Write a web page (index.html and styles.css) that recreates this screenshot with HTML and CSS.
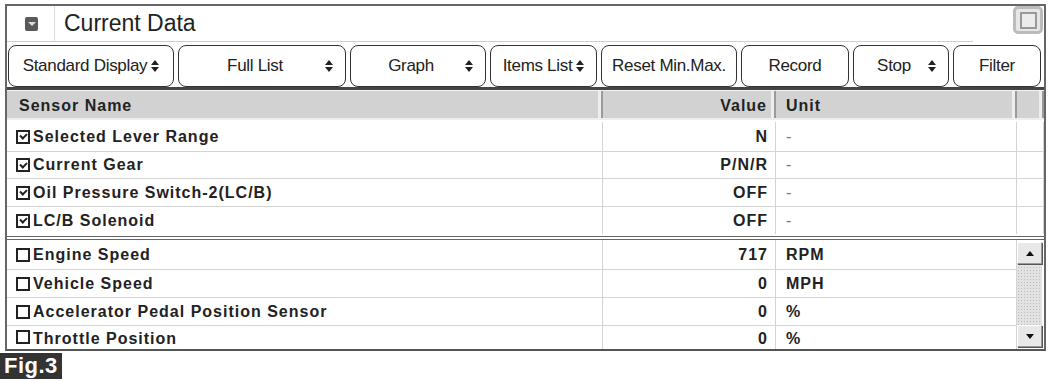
FILE: index.html
```html
<!DOCTYPE html>
<html lang="en">
<head>
    <meta charset="UTF-8">
    <meta name="viewport" content="width=device-width, initial-scale=1.0">
    <title>Current Data</title>
    <link rel="stylesheet" href="styles.css">
</head>
<body>
    <div class="panel">
        <div class="titlebar">
            <div class="title-left">
                <span class="collapse"><span class="tri"></span></span>
                <span class="divider"></span>
                <h1>Current Data</h1>
            </div>
            <span class="maxbtn"><span class="inner"></span></span>
        </div>

        <div class="toolbar">
            <div class="btn w1">Standard Display <svg class="spin" viewBox="0 0 8 12"><path d="M0 5 L4 0 L8 5 Z M0 7 L8 7 L4 12 Z"/></svg></div>
            <div class="btn w2 sel"><span class="lbl">Full List</span><svg class="spin" viewBox="0 0 8 12"><path d="M0 5 L4 0 L8 5 Z M0 7 L8 7 L4 12 Z"/></svg></div>
            <div class="btn w3 sel"><span class="lbl">Graph</span><svg class="spin" viewBox="0 0 8 12"><path d="M0 5 L4 0 L8 5 Z M0 7 L8 7 L4 12 Z"/></svg></div>
            <div class="btn w4">Items List <svg class="spin" viewBox="0 0 8 12"><path d="M0 5 L4 0 L8 5 Z M0 7 L8 7 L4 12 Z"/></svg></div>
            <div class="btn w5">Reset Min.Max.</div>
            <div class="btn w6">Record</div>
            <div class="btn w7 sel"><span class="lbl">Stop</span><svg class="spin" viewBox="0 0 8 12"><path d="M0 5 L4 0 L8 5 Z M0 7 L8 7 L4 12 Z"/></svg></div>
            <div class="btn w8">Filter</div>
        </div>

        <div class="grid head">
            <div class="cell name">Sensor Name</div>
            <div class="cell val">Value</div>
            <div class="cell unit">Unit</div>
            <div class="cell"></div>
        </div>

        <div class="fixed">
            <div class="grid row">
                <div class="cell name"><span class="chk on"></span>Selected Lever Range</div>
                <div class="cell val">N</div>
                <div class="cell unit dash">-</div>
                <div class="cell"></div>
            </div>
            <div class="grid row">
                <div class="cell name"><span class="chk on"></span>Current Gear</div>
                <div class="cell val">P/N/R</div>
                <div class="cell unit dash">-</div>
                <div class="cell"></div>
            </div>
            <div class="grid row">
                <div class="cell name"><span class="chk on"></span>Oil Pressure Switch-2(LC/B)</div>
                <div class="cell val">OFF</div>
                <div class="cell unit dash">-</div>
                <div class="cell"></div>
            </div>
            <div class="grid row">
                <div class="cell name"><span class="chk on"></span>LC/B Solenoid</div>
                <div class="cell val">OFF</div>
                <div class="cell unit dash">-</div>
                <div class="cell"></div>
            </div>
        </div>

        <div class="scrolling">
            <div class="rows">
                <div class="grid3 row">
                    <div class="cell name"><span class="chk"></span>Engine Speed</div>
                    <div class="cell val">717</div>
                    <div class="cell unit">RPM</div>
                </div>
                <div class="grid3 row">
                    <div class="cell name"><span class="chk"></span>Vehicle Speed</div>
                    <div class="cell val">0</div>
                    <div class="cell unit">MPH</div>
                </div>
                <div class="grid3 row">
                    <div class="cell name"><span class="chk"></span>Accelerator Pedal Position Sensor</div>
                    <div class="cell val">0</div>
                    <div class="cell unit">%</div>
                </div>
                <div class="grid3 row last">
                    <div class="cell name"><span class="chk"></span>Throttle Position</div>
                    <div class="cell val">0</div>
                    <div class="cell unit">%</div>
                </div>
            </div>
            <div class="scrollbar">
                <span class="arrow"><svg viewBox="0 0 8 5"><path d="M0 5 L4 0 L8 5 Z"/></svg></span>
                <span class="track"></span>
                <span class="arrow"><svg viewBox="0 0 8 5"><path d="M0 0 L8 0 L4 5 Z"/></svg></span>
            </div>
        </div>
    </div>
    <div class="fig">Fig.3</div>
</body>
</html>
```

FILE: styles.css
```css
body {
    margin: 0;
    background-color: #fff;
    font-family: "Liberation Sans", Arial, sans-serif;
    color: #222;
}

.panel {
    margin: 4px 0 0 5px;
    width: 1041px;
    height: 347px;
    box-sizing: border-box;
    border: 2px solid #666;
    border-bottom-color: #555;
    overflow: hidden;
}

/* title */
.titlebar {
    display: flex;
    height: 36px;
}

.title-left {
    display: flex;
    align-items: center;
    width: 966px;
    border-bottom: 1px solid #cfcfcf;
}

.collapse {
    display: flex;
    align-items: center;
    justify-content: center;
    width: 13px;
    height: 14px;
    margin-left: 18px;
    background-color: #5a5a5a;
    border-radius: 2px;
}

.tri {
    width: 0;
    height: 0;
    border-left: 4px solid transparent;
    border-right: 4px solid transparent;
    border-top: 4px solid #ddd;
}

.divider {
    align-self: stretch;
    width: 1px;
    margin: 0 9px 0 16px;
    background-color: #ddd;
}

h1 {
    margin: 0;
    font-weight: normal;
    font-size: 23px;
    color: #222;
}

.maxbtn {
    display: flex;
    align-items: center;
    justify-content: center;
    width: 30px;
    height: 28px;
    margin: 0 0 0 40px;
    box-sizing: border-box;
    border: 3px solid #bbb;
    border-radius: 5px;
    background-color: #e6e6e6;
}

.maxbtn .inner {
    width: 13px;
    height: 13px;
    border: 2px solid #999;
    background-color: #ececec;
}

/* toolbar */
.toolbar {
    display: flex;
    gap: 4px;
    padding: 3px 0 0 1px;
    box-sizing: border-box;
    border-bottom: 3px solid #444;
    height: 48px;
}

.btn {
    display: flex;
    align-items: center;
    justify-content: center;
    height: 42px;
    box-sizing: border-box;
    border: 1.5px solid #333;
    border-radius: 8px;
    font-size: 17px;
    letter-spacing: -0.3px;
    white-space: nowrap;
}

.btn.sel {
    justify-content: flex-end;
    padding-right: 12px;
}

.btn.sel .lbl {
    flex: 1;
    text-align: center;
    padding-left: 10px;
}

.spin {
    width: 8px;
    height: 12px;
    margin-left: 4px;
    fill: #222;
}

.w1 { width: 166px; }
.w2 { width: 168px; }
.w3 { width: 136px; }
.w4 { width: 107px; }
.w5 { width: 136px; }
.w6 { width: 108px; }
.w7 { width: 96px; }
.w8 { width: 88px; }

/* table */
.grid {
    display: grid;
    grid-template-columns: 596px 173px 241px 27px;
}

.grid3 {
    display: grid;
    grid-template-columns: 596px 173px 241px;
}

.cell {
    display: flex;
    align-items: center;
    font-size: 16px;
    font-weight: bold;
    letter-spacing: 1px;
    white-space: nowrap;
    overflow: hidden;
    box-sizing: border-box;
    border-right: 1px solid #d4d4d4;
}

.cell.val {
    justify-content: flex-end;
    padding-right: 7px;
}

.cell.unit {
    padding-left: 10px;
}

.cell.dash {
    font-weight: normal;
    color: #777;
}

.head {
    height: 30px;
    box-sizing: border-box;
    background-color: #d2d2d2;
    border-top: 1px solid #f2f2f2;
    border-bottom: 2px solid #eee;
}

.head .cell {
    border-right: 2px solid #9a9a9a;
    box-shadow: inset -3px 0 0 #eee;
}

.head .cell.name {
    padding-left: 12px;
    padding-top: 2px;
}

.head .cell.val,
.head .cell.unit {
    padding-top: 2px;
}

.row {
    height: 28px;
    box-sizing: border-box;
    border-bottom: 1px solid #d4d4d4;
}

.fixed .row:nth-child(1) { height: 32px; padding-top: 2px; }
.fixed .row:nth-child(2) { height: 27px; }
.fixed .row:nth-child(4) { height: 27px; }

.scrolling .row:first-child { height: 30px; }

.row .cell.name {
    padding-left: 9px;
}

.fixed {
    height: 120px;
    box-sizing: border-box;
    border-bottom: 4px double #666;
}

.fixed .row:last-child {
    border-bottom: none;
}

.chk {
    display: inline-flex;
    align-items: center;
    justify-content: center;
    width: 14px;
    height: 14px;
    margin-right: 3px;
    border: 2px solid #222;
    box-sizing: border-box;
}

.chk.on::after {
    content: "";
    width: 5px;
    height: 3px;
    margin-top: -2px;
    border-left: 2px solid #222;
    border-bottom: 2px solid #222;
    transform: rotate(-45deg);
}

.scrolling {
    display: flex;
    height: 109px;
    overflow: hidden;
}

.rows {
    flex: 1;
}

.row.last .cell {
    align-items: flex-start;
    padding-top: 4px;
}

.scrollbar {
    display: flex;
    flex-direction: column;
    width: 26px;
    margin: 2px 2px 2px 0;
    background-color: #e2e2e2;
    background-image: radial-gradient(#bbb 0.6px, transparent 0.8px);
    background-size: 3px 3px;
}

.arrow {
    display: flex;
    align-items: center;
    justify-content: center;
    height: 22px;
    box-sizing: border-box;
    background-color: #e8e8e8;
    border: 1px solid #999;
    border-top-color: #fff;
    border-left-color: #fff;
    box-shadow: 1px 1px 0 #555;
}

.arrow svg {
    width: 8px;
    height: 5px;
    fill: #111;
}

.track {
    flex: 1;
}

.fig {
    display: inline-block;
    margin-top: 2px;
    padding: 1px 4px;
    background-color: #333;
    color: #fff;
    font-weight: bold;
    font-size: 22px;
    line-height: 24px;
    letter-spacing: 0.5px;
}
```
